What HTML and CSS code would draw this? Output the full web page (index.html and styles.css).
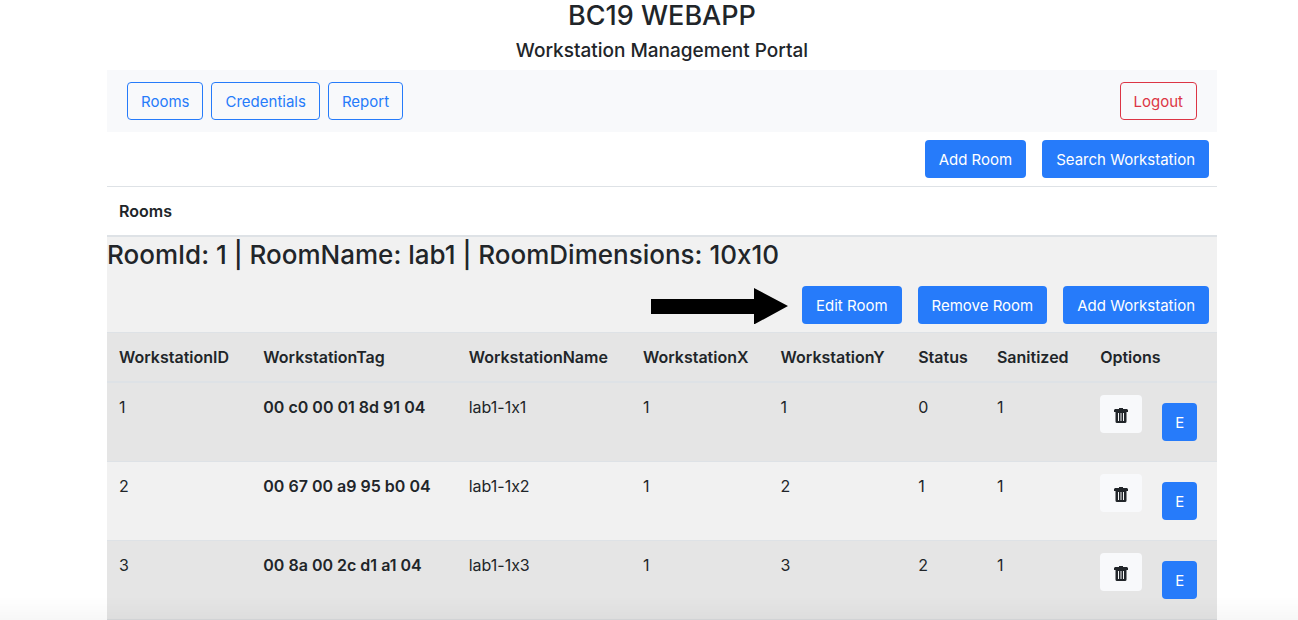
FILE: index.html
```html
<!DOCTYPE html>
<html lang="en">
<head>
<meta charset="utf-8">
<title>BC19 WEBAPP</title>
<link rel="stylesheet" href="styles.css">
</head>
<body>
<svg class="sprite" aria-hidden="true">
  <symbol id="trash" viewBox="0 0 14 15">
    <path fill="#212529" d="M5 0h4v1h4l1 1v2h-1.500v9.500q0 1.500-1.500 1.500H3q-1.500 0-1.500-1.500V4H0V2l1-1h4z"/>
    <path fill="#f8f9fa" d="M4 5h1v8H4zM9 5h1v8H9z"/>
    <path fill="#8b8d90" d="M6 5h2v8H6z"/>
  </symbol>
</svg>
<div class="container">
  <header class="masthead">
    <h1 class="title">BC19 WEBAPP</h1>
    <h2 class="subtitle">Workstation Management Portal</h2>
  </header>
  <nav class="navbar">
    <button class="btn btn-outline" type="button">Rooms</button>
    <button class="btn btn-outline" type="button">Credentials</button>
    <button class="btn btn-outline" type="button">Report</button>
    <button class="btn btn-logout" type="button">Logout</button>
  </nav>
  <div class="toolbar">
    <button class="btn btn-primary" type="button">Add Room</button>
    <button class="btn btn-primary" type="button">Search Workstation</button>
  </div>
  <h3 class="list-heading">Rooms</h3>
  <section class="room">
    <h3 class="room-title">RoomId: 1 | RoomName: lab1 | RoomDimensions: 10x10</h3>
    <div class="toolbar">
      <svg class="arrow" viewBox="0 0 138 38" aria-hidden="true"><path d="M0 13h103V2l34 18-34 18.500V28H0z"/></svg>
      <button class="btn btn-primary" type="button">Edit Room</button>
      <button class="btn btn-primary" type="button">Remove Room</button>
      <button class="btn btn-primary" type="button">Add Workstation</button>
    </div>
    <table class="stations">
      <colgroup><col class="c-id"><col class="c-tag"><col class="c-name"><col class="c-axis"><col class="c-axis"><col class="c-status"><col class="c-clean"><col class="c-options"></colgroup>
      <thead>
        <tr><th scope="col">WorkstationID</th><th scope="col">WorkstationTag</th><th scope="col">WorkstationName</th><th scope="col">WorkstationX</th><th scope="col">WorkstationY</th><th scope="col">Status</th><th scope="col">Sanitized</th><th scope="col">Options</th></tr>
      </thead>
      <tbody>
        <tr><td>1</td><th scope="row">00 c0 00 01 8d 91 04</th><td>lab1-1x1</td><td>1</td><td>1</td><td>0</td><td>1</td>
          <td><div class="options"><button class="btn btn-light" type="button" aria-label="Delete"><svg class="icon"><use href="#trash"/></svg></button><button class="btn btn-primary btn-edit" type="button">E</button></div></td></tr>
        <tr><td>2</td><th scope="row">00 67 00 a9 95 b0 04</th><td>lab1-1x2</td><td>1</td><td>2</td><td>1</td><td>1</td>
          <td><div class="options"><button class="btn btn-light" type="button" aria-label="Delete"><svg class="icon"><use href="#trash"/></svg></button><button class="btn btn-primary btn-edit" type="button">E</button></div></td></tr>
        <tr><td>3</td><th scope="row">00 8a 00 2c d1 a1 04</th><td>lab1-1x3</td><td>1</td><td>3</td><td>2</td><td>1</td>
          <td><div class="options"><button class="btn btn-light" type="button" aria-label="Delete"><svg class="icon"><use href="#trash"/></svg></button><button class="btn btn-primary btn-edit" type="button">E</button></div></td></tr>
      </tbody>
    </table>
  </section>
</div>
<div class="bottom-shade"></div>
</body>
</html>
```
FILE: styles.css
```css
* { box-sizing: border-box; }

body {
  margin: 0;
  background: #fff;
  color: #212529;
  font: 400 15px/24px Inter, "Liberation Sans", sans-serif;
  font-feature-settings: "calt" 0;
}

h1, h2, h3 { margin: 0; font-weight: 500; }

.sprite { position: absolute; width: 0; height: 0; }

.container { padding: 0 81px 0 107px; }

.masthead { text-align: center; padding-bottom: 6px; }
.title { font-size: 27px; line-height: 32px; margin-bottom: 6px; }
.subtitle { font-size: 19px; line-height: 26px; }

.navbar {
  display: flex;
  gap: 8px;
  padding: 12px 20px;
  background: #f8f9fb;
}

.btn {
  height: 38px;
  padding: 2px 13px 0;
  border: 1px solid transparent;
  border-radius: 4px;
  font: inherit;
  font-size: 15px;
  font-feature-settings: inherit;
  white-space: nowrap;
}
.btn-outline { color: #267bfa; border-color: #267bfa; background: transparent; }
.btn-logout { margin-left: auto; color: #dc3545; border-color: #dc3545; background: transparent; }
.btn-primary { color: #fff; background: #267bfa; }
.btn-light { display: flex; align-items: center; background: #f8f9fb; }

.toolbar {
  display: flex;
  justify-content: flex-end;
  gap: 16px;
  padding: 8px;
}

.list-heading {
  padding: 12px;
  border-top: 1px solid #dee2e6;
  border-bottom: 2px solid #dee2e6;
  font-size: 16px;
  line-height: 24px;
  font-weight: 600;
}

.room { background: #f1f1f1; }
.room-title { font-size: 26px; line-height: 34px; padding-top: 1px; padding-bottom: 6px; }

.arrow { width: 138px; height: 38px; margin-right: -3px; }

.stations {
  width: 100%;
  table-layout: fixed;
  border-collapse: separate;
  border-spacing: 0;
  background: #e5e5e5;
  border-bottom: 1px solid #d8dadc;
}
.stations th, .stations td {
  padding: 12px;
  border-top: 1px solid #dee2e6;
  font-size: 16px;
  text-align: left;
  vertical-align: top;
  white-space: nowrap;
}
.stations th { font-weight: 600; }
.stations thead th { border-bottom: 1px solid #dee2e6; }
.stations tbody tr { height: 79px; }
.stations tbody tr:nth-child(even) { background: #f1f1f1; }

.c-id { width: 13%; }
.c-tag { width: 18.500%; }
.c-name { width: 15.700%; }
.c-axis { width: 12.400%; }
.c-status { width: 7.100%; }
.c-clean { width: 9.300%; }

.options { display: flex; gap: 20px; }
.btn-edit { margin-top: 8px; padding: 2px 12px 0; }
.icon { width: 14px; height: 15px; margin-top: 1px; }

.bottom-shade {
  position: fixed;
  inset: auto 0 0;
  height: 24px;
  background: linear-gradient(transparent, rgba(0, 0, 0, 0.030));
  pointer-events: none;
}
```
